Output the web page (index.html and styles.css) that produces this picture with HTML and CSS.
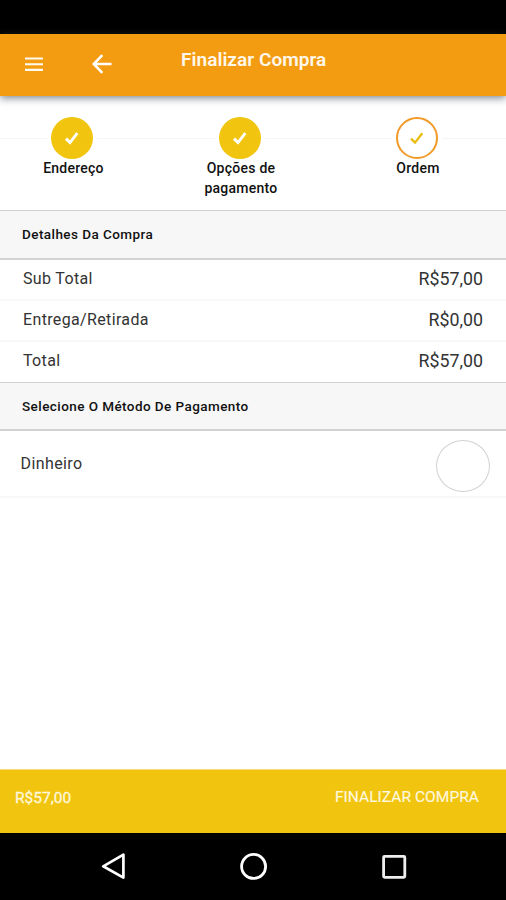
FILE: index.html
```html
<!DOCTYPE html>
<html lang="pt-BR">
<head>
<meta charset="utf-8">
<meta name="viewport" content="width=device-width, initial-scale=1">
<title>Finalizar Compra</title>
<link rel="stylesheet" href="styles.css">
</head>
<body>
<div class="screen">
  <div class="status-bar"></div>
  <header class="app-bar">
    <svg class="menu-icon" width="20" height="16" viewBox="0 0 20 16"><path d="M1 2.5H19M1 8.2H19M1 13.9H19" stroke="#fffaf0" stroke-width="2.1"/></svg>
    <svg class="back-icon" width="20" height="20" viewBox="0 0 20 20"><path d="M10.3 1.2L1.7 10L10.3 18.8M1.7 10H19.5" fill="none" stroke="#fff" stroke-width="2.6"/></svg>
    <h1 class="title">Finalizar Compra</h1>
  </header>
  <main class="content">
    <ol class="steps">
      <li class="step">
        <span class="dot"><svg width="16" height="14" viewBox="0 0 16 14"><path d="M2 7.6L6 11.6L13.3 2.2" fill="none" stroke="currentColor" stroke-width="2.9"/></svg></span>
        <span class="step-label">Endereço</span>
      </li>
      <li class="step">
        <span class="dot"><svg width="16" height="14" viewBox="0 0 16 14"><path d="M2 7.6L6 11.6L13.3 2.2" fill="none" stroke="currentColor" stroke-width="2.9"/></svg></span>
        <span class="step-label">Opções de<br>pagamento</span>
      </li>
      <li class="step">
        <span class="dot current"><svg width="16" height="14" viewBox="0 0 16 14"><path d="M2 7.6L6 11.6L13.3 2.2" fill="none" stroke="currentColor" stroke-width="2.3"/></svg></span>
        <span class="step-label">Ordem</span>
      </li>
    </ol>
    <h2 class="section">Detalhes Da Compra</h2>
    <dl class="rows">
      <div class="row"><dt>Sub Total</dt><dd>R$57,00</dd></div>
      <div class="row"><dt>Entrega/Retirada</dt><dd>R$0,00</dd></div>
      <div class="row"><dt>Total</dt><dd>R$57,00</dd></div>
    </dl>
    <h2 class="section payment">Selecione O Método De Pagamento</h2>
    <label class="method"><span>Dinheiro</span><span class="radio"></span></label>
  </main>
  <footer class="checkout">
    <span class="amount">R$57,00</span>
    <span class="action">FINALIZAR COMPRA</span>
  </footer>
  <nav class="nav-bar">
    <svg width="28" height="28" viewBox="0 0 28 28"><path d="M3.2 14.3L23.4 2.6V25.6Z" fill="none" stroke="#fff" stroke-width="2.7" stroke-linejoin="round"/></svg>
    <svg width="28" height="28" viewBox="0 0 28 28"><circle cx="13.6" cy="14.4" r="12" fill="none" stroke="#fff" stroke-width="2.8"/></svg>
    <svg width="28" height="28" viewBox="0 0 28 28"><rect x="3.6" y="4.3" width="21.2" height="21" rx="1" fill="none" stroke="#eee" stroke-width="2.8"/></svg>
  </nav>
</div>
</body>
</html>
```

FILE: styles.css
```css
* { box-sizing: border-box; }
body, h1, h2, ol, dl, dd { margin: 0; padding: 0; }
body { background: #fff; color: #333; font-family: Roboto, sans-serif; }
.screen { display: flex; flex-direction: column; height: 900px; overflow: hidden; }
.status-bar { height: 34px; background: #000; flex: none; }
.app-bar {
  display: flex; align-items: center; flex: none; height: 62px; padding-left: 24px;
  background: #f39c12; box-shadow: 0 2px 8px rgba(50, 65, 80, .65);
}
.menu-icon { margin-top: -2px; }
.back-icon { margin: -2px 0 0 48px; }
.title {
  margin: -10px 0 0 69px; color: #fff8ea; font-size: 19px; font-weight: 600;
  line-height: 24px; letter-spacing: .05px; white-space: nowrap;
}
.content { flex: 1; }
.steps {
  display: grid; grid-template-columns: 147px 188px 166px; height: 114px; padding-top: 21px;
  list-style: none; background: linear-gradient(#f5f5f5, #f5f5f5) 0 42px / 100% 1px no-repeat;
}
.step { display: flex; flex-direction: column; align-items: center; }
.dot {
  display: grid; place-items: center; width: 42px; height: 42px; margin-right: 3px;
  border-radius: 50%; background: #f1c40f; color: #fff; box-shadow: 0 0 0 4px #fff;
}
.dot.current { background: #fff; border: 2.4px solid #f19a28; color: #e8bd10; }
.step-label {
  margin-top: -1px; color: #111; font-size: 14px; font-weight: 500; line-height: 20px;
  letter-spacing: .25px; text-align: center; z-index: 1;
}
.section {
  height: 50px; padding-left: 22px; border: solid #d2d2d2; border-width: 1px 0 2px;
  background: #f7f7f7; color: #111; font-size: 13.5px; font-weight: 500;
  line-height: 47px; letter-spacing: .43px;
}
.payment { height: 49px; line-height: 47px; }
.rows { height: 122px; }
.row {
  display: flex; justify-content: space-between; height: 41px; padding: 0 23px;
  border-bottom: 2px solid #f7f7f7; line-height: 38px;
}
.row:last-child { height: 40px; border: 0; }
.row dt { line-height: 37px; font-size: 16px; letter-spacing: .35px; }
.row dd { font-size: 17.8px; }
.method {
  display: flex; justify-content: space-between; height: 67px; padding: 9px 16px 0 20.5px;
  border-bottom: 2px solid #f8f8f8; font-size: 16px;
  line-height: 47px; letter-spacing: .4px;
}
.radio { width: 54px; height: 52px; border: 1.5px solid #d2d2d2; border-radius: 50%; }
.checkout {
  display: flex; justify-content: space-between; flex: none; height: 64px; padding: 0 27px 0 15px;
  border-top: 1px solid #f6dc77; background: #f1c40f; color: #fff8dc; font-size: 15.5px; line-height: 54px;
}
.amount { padding-top: 1px; -webkit-text-stroke: .3px #fff8dc; }
.action { letter-spacing: .05px; -webkit-text-stroke: .2px #fff8dc; }
.nav-bar {
  display: flex; flex: none; gap: 112px; height: 67px; padding: 19px 0 0 100px; background: #000;
}
```
